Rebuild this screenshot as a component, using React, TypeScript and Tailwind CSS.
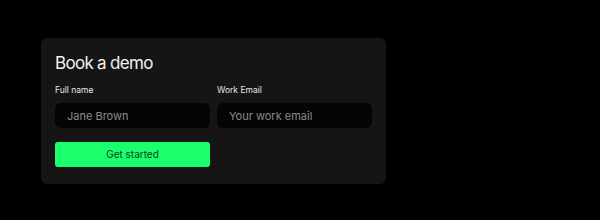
export default function App() {
  return (
    <div className="w-[600px] h-[220px] bg-black pt-[38px] pl-[41px] font-['Inter',sans-serif]">
      <div className="w-[345px] h-[146px] bg-[#151516] rounded-md px-[14px] pt-[13px]">
        <h2 className="text-[17px] leading-[22px] text-[#f2f2f2] tracking-[-0.7px] mt-[1px]">Book a demo</h2>
        <div className="grid grid-cols-2 gap-[7px] mt-[11px]">
          <div className="flex flex-col">
            <label className="text-[8.5px] leading-[10px] text-[#e6e6e6]">Full name</label>
            <input
              className="mt-[8px] h-[25px] rounded-md bg-[#050505] px-[12px] text-[11px] text-[#ddd] placeholder:text-[#8a8a8a] outline-none"
              placeholder="Jane Brown"
            />
          </div>
          <div className="flex flex-col">
            <label className="text-[8.5px] leading-[10px] text-[#e6e6e6]">Work Email</label>
            <input
              className="mt-[8px] h-[25px] rounded-md bg-[#050505] px-[12px] text-[11px] text-[#ddd] placeholder:text-[#8a8a8a] outline-none"
              placeholder="Your work email"
            />
          </div>
        </div>
        <button className="mt-[14px] w-[155px] h-[25px] rounded-[3px] bg-[#1aff6b] text-[10px] text-[#0b3d1c]">
          Get started
        </button>
      </div>
    </div>
  );
}
